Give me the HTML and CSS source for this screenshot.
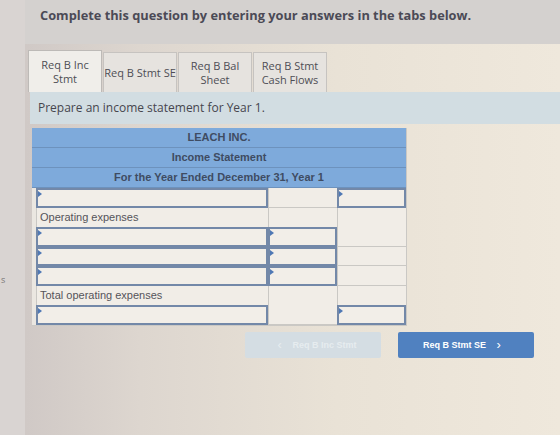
FILE: index.html
```html
<!doctype html>
<html lang="en">
  <head>
    <meta charset="UTF-8" />
    <title>Req B Inc Stmt</title>
    <link rel="stylesheet" href="styles.css">
  </head>
  <body>
    <div class="gutter">s</div>

    <div class="main">
      <div class="header">
        <h2 class="title">Complete this question by entering your answers in the tabs below.</h2>
      </div>

      <div class="tabs">
        <div class="tab active">Req B Inc<br>Stmt</div>
        <div class="tab">Req B Stmt SE</div>
        <div class="tab">Req B Bal<br>Sheet</div>
        <div class="tab">Req B Stmt<br>Cash Flows</div>
      </div>

      <div class="prompt">Prepare an income statement for Year 1.</div>

      <div class="statement">
        <div class="head-row">LEACH INC.</div>
        <div class="head-row">Income Statement</div>
        <div class="head-row">For the Year Ended December 31, Year 1</div>

        <div class="row">
          <div class="cell input"></div>
          <div class="cell"></div>
          <div class="cell input"></div>
        </div>
        <div class="row">
          <div class="cell label">Operating expenses</div>
          <div class="cell"></div>
          <div class="cell"></div>
        </div>
        <div class="row">
          <div class="cell input"></div>
          <div class="cell input"></div>
          <div class="cell"></div>
        </div>
        <div class="row">
          <div class="cell input"></div>
          <div class="cell input"></div>
          <div class="cell"></div>
        </div>
        <div class="row">
          <div class="cell input"></div>
          <div class="cell input"></div>
          <div class="cell"></div>
        </div>
        <div class="row">
          <div class="cell label">Total operating expenses</div>
          <div class="cell"></div>
          <div class="cell"></div>
        </div>
        <div class="row">
          <div class="cell input"></div>
          <div class="cell"></div>
          <div class="cell input"></div>
        </div>
      </div>

      <div class="nav">
        <button class="nav-btn prev" disabled><span class="arrow">&lsaquo;</span> Req B Inc Stmt</button>
        <button class="nav-btn next">Req B Stmt SE <span class="arrow">&rsaquo;</span></button>
      </div>
    </div>
  </body>
</html>
```

FILE: styles.css
```css
body {
  margin: 0;
  display: flex;
  height: 435px;
  overflow: hidden;
  font-family: "Open Sans", sans-serif;
  background: linear-gradient(90deg, #cdc6c4 0%, #ddd6cf 25%, #e9e2d6 60%, #efe8dc 100%);
}

.gutter {
  width: 25px;
  flex: none;
  box-sizing: border-box;
  padding: 273px 0 0 1px;
  font-size: 9px;
  color: #7a7676;
  background: #d9d4d2;
}

.main {
  flex: 1;
  display: flex;
  flex-direction: column;
}

.header {
  height: 44px;
  box-sizing: border-box;
  padding: 6px 0 0 15px;
  background: #d4d1cf;
}

.title {
  margin: 0;
  font-size: 12.8px;
  font-weight: 700;
  color: #4b4a56;
}

.tabs {
  display: flex;
  align-items: flex-end;
  gap: 1px;
  margin: 6px 0 0 3px;
}

.tab {
  width: 74px;
  height: 40px;
  box-sizing: border-box;
  display: flex;
  align-items: center;
  justify-content: center;
  text-align: center;
  font-size: 11px;
  line-height: 14px;
  color: #4e4e55;
  background: #e6e3df;
  border: 1px solid #c6c3c0;
  border-bottom: none;
}

.tab.active {
  height: 42px;
  background: #f0eeea;
  border-color: #bdbab7;
}

.prompt {
  height: 32px;
  margin-left: 5px;
  padding-left: 8px;
  line-height: 31px;
  font-size: 12px;
  color: #46464e;
  background: #d2dde2;
}

.statement {
  width: 374px;
  margin: 4px 0 0 7px;
  font-family: "Liberation Sans", Arial, sans-serif;
  border-right: 1px solid #cac8c4;
  border-bottom: 1px solid #cac8c4;
}

.head-row {
  height: 20px;
  box-sizing: border-box;
  line-height: 19px;
  text-align: center;
  font-size: 11px;
  font-weight: 700;
  color: #3f4c62;
  background: #7eaadb;
  border-bottom: 1px solid #6d92bd;
}

.row {
  display: grid;
  grid-template-columns: 232px 69px 69px;
  height: 19.5px;
  padding-left: 4px;
  background: #ebe7e1;
}

.cell {
  position: relative;
  box-sizing: border-box;
  background: #f1ede7;
  border: 1px solid #cac8c4;
  border-width: 0 0 1px 1px;
}

.cell.label {
  padding-left: 3px;
  font-size: 11px;
  line-height: 19px;
  color: #55545a;
}

.cell.input {
  border: 2px solid #7388a8;
  background: #f2eee8;
}

/* small marker in the corner of each entry cell */
.cell.input::before {
  content: "";
  position: absolute;
  top: 1px;
  left: 0;
  border-top: 3px solid transparent;
  border-bottom: 3px solid transparent;
  border-left: 4px solid #4f78b4;
}

.nav {
  display: flex;
  justify-content: flex-end;
  gap: 17px;
  margin-top: 6px;
  padding-right: 26px;
}

.nav-btn {
  width: 136px;
  height: 26px;
  border: none;
  border-radius: 2px;
  font-family: "Liberation Sans", Arial, sans-serif;
  font-size: 9px;
  font-weight: 700;
  color: #fff;
  background: #5081c0;
}

.nav-btn.prev {
  color: #e6ecef;
  background: #d4dde3;
}

.arrow {
  font-size: 13px;
  font-weight: 400;
  margin: 0 8px;
  vertical-align: -1px;
}
```
